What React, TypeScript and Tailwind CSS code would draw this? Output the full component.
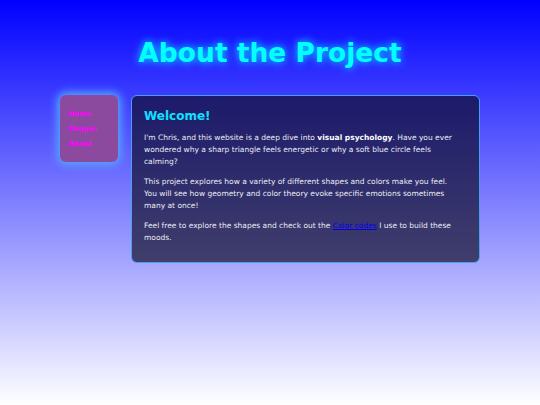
export default function App() {
  return (
    <div
      className="w-[540px] h-[405px] overflow-hidden bg-[linear-gradient(to_bottom,#0000ff,#ffffff)]"
      style={{ fontFamily: '"DejaVu Sans", Verdana, sans-serif' }}
    >
      <h1 className="pt-[37px] text-center text-[26.5px] leading-[32px] font-bold text-[#00ffff] [text-shadow:0_0_8px_#00ffff]">
        About the Project
      </h1>
      <div className="mt-[26px] mx-[60px] flex items-start gap-[13px]">
        <nav className="w-[58px] h-[67px] shrink-0 rounded-[6px] bg-[#8c4a9e] shadow-[0_0_9px_3px_#55a8ff] pt-[14px] pl-[8px] flex flex-col gap-[5px]">
          <a className="text-[7px] leading-[10px] font-bold text-[#ff00ff]">Home</a>
          <a className="text-[7px] leading-[10px] font-bold text-[#ff00ff]">Shapes</a>
          <a className="text-[7px] leading-[10px] font-bold text-[#ff00ff]">About</a>
        </nav>
        <main className="flex-1 h-[168px] rounded-[6px] border border-[#45a0f0] bg-[linear-gradient(to_bottom,#1c1a6b,#403e6b)] pl-[12px] pr-[18px] pt-[12px] text-[#ececf4] text-[7.5px] leading-[12px]">
          <h2 className="text-[12px] leading-[16px] font-bold text-[#10e0ff] mb-[8px]">Welcome!</h2>
          <p className="mb-[8px]">
            I'm Chris, and this website is a deep dive into <b className="text-white">visual psychology</b>. Have you ever wondered why a sharp triangle feels energetic or why a soft blue circle feels calming?
          </p>
          <p className="mb-[8px]">
            This project explores how a variety of different shapes and colors make you feel. You will see how geometry and color theory evoke specific emotions sometimes many at once!
          </p>
          <p className="mt-[1px]">
            Feel free to explore the shapes and check out the <a className="text-[#0000ee] underline">Color codes</a> I use to build these moods.
          </p>
        </main>
      </div>
    </div>
  );
}
